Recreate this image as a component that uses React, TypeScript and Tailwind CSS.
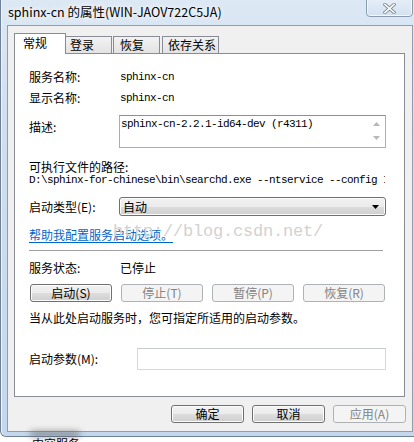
import React from "react";

const btn =
  "flex items-center justify-center rounded-[3px] border border-[#707070] bg-[linear-gradient(to_bottom,#f2f2f2_0%,#ebebeb_50%,#dddddd_51%,#cfcfcf_100%)] text-[12px] text-black shadow-[inset_0_0_0_1px_#fcfcfc]";
const btnOff =
  "flex items-center justify-center rounded-[3px] border border-[#adb2b5] bg-[#f4f4f4] text-[12px] text-[#838383]";
const mono = "font-['Liberation_Mono',monospace] text-[11px] tracking-[-0.6px] text-black";

function Arrow({ up }: { up?: boolean }) {
  return (
    <svg width="7" height="4" viewBox="0 0 7 4">
      {up ? <path d="M0 4 L3.5 0 L7 4 Z" fill="#b8b8b8" /> : <path d="M0 0 L3.5 4 L7 0 Z" fill="#b8b8b8" />}
    </svg>
  );
}

export default function App() {
  return (
    <div className="relative h-[442px] w-[414px] overflow-hidden bg-white font-['Noto_Sans_CJK_SC','Noto_Sans',sans-serif] text-[12px] leading-[16px] text-black">
      {/* window frame */}
      <div className="flex h-[437px] w-[424px] flex-col rounded-b-[6px] border border-t-0 border-[#6f8196] bg-[linear-gradient(to_bottom,#dce8f4_0%,#cfdfef_30%,#c4d7ec_100%)] pl-[6px] pt-[25px] pb-[5px] shadow-[inset_1px_0_0_#eef4fa]">
        {/* client area */}
        <div className="flex h-[407px] w-[406px] flex-col border border-[#8e9db1] bg-[#f0f0f0] pl-[6px] pt-[7px] pb-[8px]">
          {/* tabs */}
          <div className="relative z-10 flex h-[20px] items-end">
            <div className="mb-[-1px] flex h-[21px] w-[52px] items-start border border-b-0 border-[#898c95] bg-white pl-[8px] pt-[1px]">
              常规
            </div>
            <div className="flex h-[17px] w-[46px] items-start border border-b-0 border-l-0 border-[#898c95] bg-[linear-gradient(to_bottom,#f2f2f2,#e3e3e3)] pl-[4px]">
              登录
            </div>
            <div className="ml-[1px] flex h-[17px] w-[47px] items-start border border-b-0 border-[#898c95] bg-[linear-gradient(to_bottom,#f2f2f2,#e3e3e3)] pl-[6px]">
              恢复
            </div>
            <div className="ml-[2px] flex h-[17px] w-[57px] items-start border border-b-0 border-[#898c95] bg-[linear-gradient(to_bottom,#f2f2f2,#e3e3e3)] pl-[5px]">
              依存关系
            </div>
          </div>

          {/* tab panel */}
          <div className="relative flex h-[344px] w-[391px] flex-col border border-[#898c95] bg-white pl-[14px] pr-[17px]">
            <div className="mt-[15px] flex h-[16px] items-center">
              <span className="w-[91px]">服务名称:</span>
              <span className={mono}>sphinx-cn</span>
            </div>
            <div className="mt-[5px] flex h-[16px] items-center">
              <span className="w-[91px]">显示名称:</span>
              <span className={mono}>sphinx-cn</span>
            </div>
            <div className="mt-[9px] flex h-[33px] items-start">
              <span className="w-[90px] pt-[4px]">描述:</span>
              <div className="flex h-[33px] w-[267px] border border-[#abadb3] border-t-[#8e8f8f] bg-white">
                <div className={"flex-1 pl-[1px] pt-[1px] leading-[14px] " + mono}>sphinx-cn-2.2.1-id64-dev (r4311)</div>
                <div className="flex w-[17px] flex-col items-center gap-[10px] pt-[6px] pr-[1px]">
                  <Arrow up />
                  <Arrow />
                </div>
              </div>
            </div>
            <div className="mt-[13px] flex h-[12px] items-center leading-[12px]">可执行文件的路径:</div>
            <div className={"mt-[1px] h-[12px] w-[356px] overflow-hidden whitespace-nowrap leading-[12px] " + mono}>
              D:\sphinx-for-chinese\bin\searchd.exe --ntservice --config I
            </div>
            <div className="mt-[11px] flex h-[19px] items-center">
              <span className="w-[90px]">启动类型(E):</span>
              <div className="flex h-[19px] w-[267px] items-center justify-between rounded-[3px] border border-[#707070] bg-[linear-gradient(to_bottom,#f2f2f2_0%,#ebebeb_50%,#dddddd_51%,#cfcfcf_100%)] pl-[3px] pr-[6px] shadow-[inset_0_0_0_1px_#fcfcfc]">
                <span>自动</span>
                <svg width="7" height="4" viewBox="0 0 7 4">
                  <path d="M0 0 L7 0 L3.5 4 Z" fill="#000" />
                </svg>
              </div>
            </div>
            <div className="mt-[11px] flex h-[16px] items-center">
              <span className="text-[#0066cc] underline underline-offset-[2px]">帮助我配置服务启动选项。</span>
            </div>
            <div className="mt-[7px] h-[1px] w-[354px] bg-[#a0a0a0]" />
            <div className="mt-[9px] flex h-[16px] items-center">
              <span className="w-[91px]">服务状态:</span>
              <span>已停止</span>
            </div>
            <div className="mt-[8px] ml-[1px] flex h-[18px] gap-[9px]">
              <div className={"w-[82px] " + btn}>启动(S)</div>
              <div className={"w-[82px] " + btnOff}>停止(T)</div>
              <div className={"w-[82px] " + btnOff}>暂停(P)</div>
              <div className={"w-[82px] " + btnOff}>恢复(R)</div>
            </div>
            <div className="mt-[8px] flex h-[16px] items-center">当从此处启动服务时，您可指定所适用的启动参数。</div>
            <div className="mt-[22px] flex h-[22px] items-center">
              <span className="w-[108px]">启动参数(M):</span>
              <div className="h-[22px] w-[249px] border border-[#d5d9de] border-t-[#c6cacf] bg-white" />
            </div>

            {/* watermark */}
            <div className="pointer-events-none absolute left-[98px] top-[168px] font-['Liberation_Mono',monospace] text-[17px] leading-[20px] tracking-[-0.2px] text-[#d2d2d2]">
              http://blog.csdn.net/
            </div>
          </div>

          {/* dialog buttons */}
          <div className="mt-[8px] flex h-[18px] justify-end gap-[8px] pr-[6px]">
            <div className={"w-[73px] " + btn}>确定</div>
            <div className={"w-[73px] " + btn}>取消</div>
            <div className={"w-[73px] " + btnOff}>应用(A)</div>
          </div>
        </div>
      </div>

      {/* title */}
      <div className="absolute left-[8px] top-[4px] text-[12.5px] leading-[16px] text-black [text-shadow:0_0_6px_#ffffff,0_0_10px_#ffffff]">
        sphinx-cn 的属性(WIN-JAOV722C5JA)
      </div>

      {/* close button */}
      <div className="absolute left-[366px] top-[-4px] flex h-[21px] w-[47px] items-center justify-center rounded-b-[4px] border border-[#8a9bb0] bg-[linear-gradient(to_bottom,#e9f0f8,#d3e1f0)] pt-[4px] shadow-[inset_0_0_0_1px_#f3f7fb]">
        <svg width="13" height="11" viewBox="0 0 13 11">
          <path d="M2 1.5 L11 9.5 M11 1.5 L2 9.5" stroke="#7f8a96" strokeWidth="3.4" strokeLinecap="square" />
          <path d="M2 1.5 L11 9.5 M11 1.5 L2 9.5" stroke="#ffffff" strokeWidth="1.6" strokeLinecap="square" />
        </svg>
      </div>

      {/* partial text below the window */}
      <div className="absolute left-[30px] top-[431px] h-[6px] w-[50px] rounded-full bg-[#5a5a5a] opacity-60 blur-[3px]" />
      <div className="absolute left-[32px] top-[437px] h-[5px] overflow-hidden">
        <div className="text-[12px] leading-[14px] text-black">内容服务</div>
      </div>
    </div>
  );
}
